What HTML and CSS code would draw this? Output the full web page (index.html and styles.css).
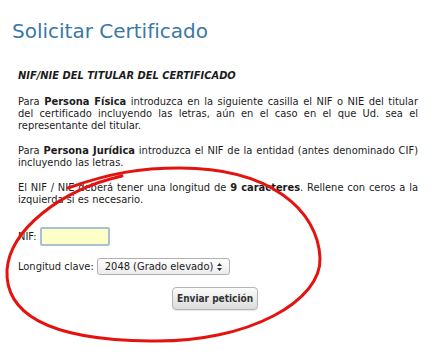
FILE: index.html
```html
<!DOCTYPE html>
<html lang="es">
<head>
<meta charset="utf-8">
<link rel="stylesheet" href="styles.css">
</head>
<body>
<div class="page">
  <h1 class="title">Solicitar Certificado</h1>
  <div class="content">
    <h2 class="section">NIF/NIE DEL TITULAR DEL CERTIFICADO</h2>
    <p class="para">Para <b>Persona Física</b> introduzca en la siguiente casilla el NIF o NIE del titular del certificado incluyendo las letras, aún en el caso en el que Ud. sea el representante del titular.</p>
    <p class="para">Para <b>Persona Jurídica</b> introduzca el NIF de la entidad (antes denominado CIF) incluyendo las letras.</p>
    <p class="para">El NIF / NIE deberá tener una longitud de <b>9 caracteres</b>. Rellene con ceros a la izquierda si es necesario.</p>
    <form class="form">
      <div class="row"><label class="label">NIF:</label><span class="input"></span></div>
      <div class="row"><label class="label">Longitud clave:</label>
        <span class="select"><span class="select-text">2048 (Grado elevado)</span>
          <svg class="arrows" width="7" height="10" viewBox="0 0 7 10"><path d="M1 4 L3.5 1 L6 4 Z M1 6 L3.5 9 L6 6 Z" fill="#333"/></svg>
        </span>
      </div>
      <div class="actions"><span class="button">Enviar petición</span></div>
    </form>
  </div>
  <svg class="circle" width="436" height="357" viewBox="0 0 436 357">
    <path d="M122 176 C 60 190, 10 230, 7 270 C 5 312, 45 340, 150 341 C 250 343, 322 300, 320 258 C 318 210, 270 168, 180 168 C 140 168, 110 173, 68 188" fill="none" stroke="#e3140f" stroke-width="3" stroke-linecap="round"/>
  </svg>
</div>
</body>
</html>
```
FILE: styles.css
```css
html, body { margin: 0; padding: 0; background: #fff; }
.page { position: relative; width: 436px; height: 357px; overflow: hidden; font-family: "DejaVu Sans Condensed", "DejaVu Sans", sans-serif; color: #1c1c1c; }
.title { margin: 0; padding: 18px 0 0 12px; font-family: "DejaVu Sans", sans-serif; font-size: 20px; font-weight: normal; color: #3a78a6; line-height: 26px; }
.content { padding: 25px 18px 0 18px; width: 400px; }
.section { margin: 0 0 14px; font-size: 11px; font-weight: bold; font-style: italic; line-height: 13px; }
.para { margin: 0 0 13px; font-size: 11px; line-height: 12px; text-align: justify; }
.form { padding-top: 8px; }
.row { display: flex; align-items: center; gap: 3px; margin-bottom: 12px; font-size: 11px; }
.input { display: inline-block; width: 66px; height: 15px; background: #ffffc8; border: 2px solid #a6c0d6; border-radius: 2px; }
.select { display: inline-flex; align-items: center; justify-content: space-between; width: 118px; height: 15px; padding: 0 6px 0 7px; border: 1px solid #b0b0b0; border-radius: 3px; background: linear-gradient(#ffffff, #ececec); font-size: 11px; }
.actions { padding-left: 154px; }
.button { display: inline-block; padding: 5px 4px; border: 1px solid #b5b5b5; border-radius: 4px; background: linear-gradient(#fbfbfb, #dcdcdc); font-family: "DejaVu Sans Condensed", sans-serif; font-weight: bold; font-size: 10px; color: #333; box-shadow: 0 1px 1px rgba(0,0,0,0.1); }
.circle { position: absolute; left: 0; top: 0; pointer-events: none; }
```
